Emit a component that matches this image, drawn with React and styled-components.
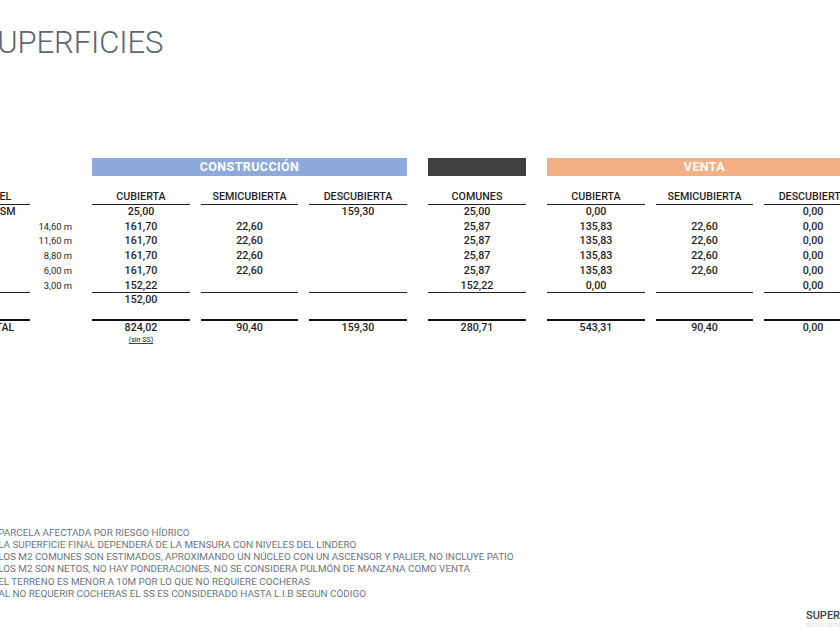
import styled, { createGlobalStyle } from "styled-components";

const GlobalStyle = createGlobalStyle`
  html, body {
    margin: 0;
    padding: 0;
    background: #ffffff;
    overflow: hidden;
  }
  body {
    font-family: Roboto, "Noto Sans", sans-serif;
  }
`;

// the slide is cropped on the left, so the page starts off-screen
const Page = styled.div`
  width: 920px;
  height: 630px;
  margin-left: -40px;
  display: flex;
  flex-direction: column;
  box-sizing: border-box;
  padding-bottom: 1px;
`;

const Title = styled.h1`
  margin: 25px 0 0 19px;
  font-size: 31px;
  font-weight: 300;
  line-height: 36px;
  color: #5b6670;
  letter-spacing: -0.1px;
`;

const Table = styled.div`
  margin-top: 97px;
  display: flex;
  flex-direction: column;
`;

const Row = styled.div`
  display: flex;
  align-items: stretch;
  margin-top: ${(p) => p.$top || 0}px;
`;

const Band = styled.div`
  margin-left: ${(p) => p.$gap}px;
  width: ${(p) => p.$w}px;
  height: 18px;
  background: ${(p) => p.$bg};
  color: #ffffff;
  font-size: 12.5px;
  font-weight: 700;
  line-height: 18px;
  text-align: center;
  letter-spacing: 0.4px;
`;

const Cell = styled.div`
  box-sizing: border-box;
  margin-left: ${(p) => p.$gap}px;
  width: ${(p) => p.$w}px;
  flex: none;
  font-size: ${(p) => (p.$small ? 9.4 : 10.7)}px;
  font-weight: ${(p) => (p.$small ? 400 : 500)};
  color: #1f1f1f;
  white-space: nowrap;
  text-align: ${(p) => p.$align};
  padding-left: ${(p) => p.$pl || 0}px;
  padding-right: ${(p) => p.$pr || 0}px;
  line-height: ${(p) => p.$lh}px;
  padding-top: ${(p) => p.$pt || 0}px;
  border-bottom: ${(p) => (p.$line ? "1px solid #222" : "1px solid transparent")};
  border-top: ${(p) => (p.$thick ? "2px solid #111" : "0")};
`;

const SinSS = styled.div`
  font-size: 7px;
  font-weight: 500;
  line-height: 10px;
  text-decoration: underline;
  color: #444;
`;

const Notes = styled.ul`
  list-style: none;
  margin: auto 0 0 0;
  padding: 0 0 0 33px;
`;

const Note = styled.li`
  font-size: 9.9px;
  line-height: 12.2px;
  color: #6b7580;
  white-space: nowrap;
`;

const Footer = styled.div`
  margin-top: 9px;
  padding-left: 846px;
  display: flex;
  flex-direction: column;
`;

const FooterTitle = styled.span`
  font-size: 11px;
  font-weight: 500;
  line-height: 13px;
  color: #3b4046;
  white-space: nowrap;
`;

const FooterSub = styled.span`
  font-size: 5px;
  line-height: 7px;
  color: #d4d7da;
  white-space: nowrap;
`;

const cols = [
  { w: 70, gap: 0, align: "left", pl: 22 },
  { w: 50, gap: 0, align: "right", pr: 8, noLine: true, small: true },
  { w: 98, gap: 12, align: "center" },
  { w: 97, gap: 11, align: "center" },
  { w: 98, gap: 11, align: "center" },
  { w: 98, gap: 21, align: "center" },
  { w: 98, gap: 21, align: "center" },
  { w: 97, gap: 11, align: "center" },
  { w: 98, gap: 11, align: "center" },
];

const header = ["NIVEL", "", "CUBIERTA", "SEMICUBIERTA", "DESCUBIERTA", "COMUNES", "CUBIERTA", "SEMICUBIERTA", "DESCUBIERTA"];

const rows = [
  ["PB/SM", "", "25,00", "", "159,30", "25,00", "0,00", "", "0,00"],
  ["P5", "14,60 m", "161,70", "22,60", "", "25,87", "135,83", "22,60", "0,00"],
  ["P4", "11,60 m", "161,70", "22,60", "", "25,87", "135,83", "22,60", "0,00"],
  ["P3", "8,80 m", "161,70", "22,60", "", "25,87", "135,83", "22,60", "0,00"],
  ["P2", "6,00 m", "161,70", "22,60", "", "25,87", "135,83", "22,60", "0,00"],
  ["P1", "3,00 m", "152,22", "", "", "152,22", "0,00", "", "0,00"],
];

const subsuelo = ["SS", "", "152,00", "", "", "", "", "", ""];
const total = ["TOTAL", "", "824,02", "90,40", "159,30", "280,71", "543,31", "90,40", "0,00"];

const notes = [
  "PARCELA AFECTADA POR RIESGO HÍDRICO",
  "LA SUPERFICIE FINAL DEPENDERÁ DE LA MENSURA CON NIVELES DEL LINDERO",
  "LOS M2 COMUNES SON ESTIMADOS, APROXIMANDO UN NÚCLEO CON UN ASCENSOR Y PALIER, NO INCLUYE PATIO",
  "LOS M2 SON NETOS, NO HAY PONDERACIONES, NO SE CONSIDERA PULMÓN DE MANZANA COMO VENTA",
  "EL TERRENO ES MENOR A 10M POR LO QUE NO REQUIERE COCHERAS",
  "AL NO REQUERIR COCHERAS EL SS ES CONSIDERADO HASTA L.I.B SEGUN CÓDIGO",
];

const renderRow = (values, opts = {}) =>
  values.map((v, i) => {
    const c = cols[i];
    return (
      <Cell
        key={i}
        $w={c.w}
        $gap={c.gap}
        $align={c.align}
        $pl={c.pl}
        $pr={c.pr}
        $small={c.small}
        $lh={opts.lh || 13.7}
        $pt={opts.pt}
        $line={opts.line && !c.noLine}
        $thick={opts.thick && !c.noLine}
      >
        {v}
        {opts.extra && opts.extra[i]}
      </Cell>
    );
  });

const App = () => {
  return (
    <>
      <GlobalStyle />
      <Page>
        <Title>SUPERFICIES</Title>
        <Table>
          <Row>
            <Band $gap={132} $w={315} $bg="#8eaadb">CONSTRUCCIÓN</Band>
            <Band $gap={21} $w={98} $bg="#3f3f3f" />
            <Band $gap={21} $w={315} $bg="#f4b084">VENTA</Band>
          </Row>
          <Row $top={10}>{renderRow(header, { line: true, lh: 14, pt: 4 })}</Row>
          {rows.map((r, i) => (
            <Row key={i}>{renderRow(r, { line: i === rows.length - 1 })}</Row>
          ))}
          <Row>{renderRow(subsuelo, { lh: 13 })}</Row>
          <Row $top={12}>
            {renderRow(total, {
              thick: true,
              lh: 14,
              extra: { 2: <SinSS>(sin SS)</SinSS> },
            })}
          </Row>
        </Table>
        <Notes>
          {notes.map((n) => (
            <Note key={n}>- {n}</Note>
          ))}
        </Notes>
        <Footer>
          <FooterTitle>SUPERFICIES</FooterTitle>
          <FooterSub>ESTUDIO DE FACTIBILIDAD</FooterSub>
        </Footer>
      </Page>
    </>
  );
};

export default App;
